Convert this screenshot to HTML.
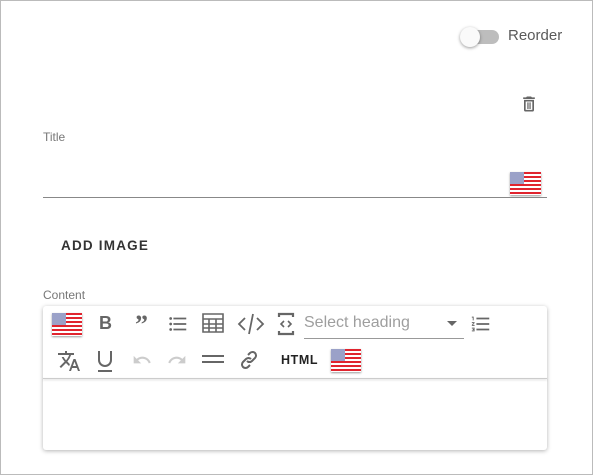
<!DOCTYPE html>
<html><head><style>
*{box-sizing:border-box}
body{margin:0;width:593px;height:475px;background:#fff;font-family:"Liberation Sans",sans-serif;position:relative;overflow:hidden}
.frame{position:absolute;left:0;top:0;width:593px;height:475px;border:1px solid #bbb}
.abs{position:absolute}
.flag{position:absolute;width:31px;height:23px;background:repeating-linear-gradient(#e0242e 0 2px,#fff 2px 4px);box-shadow:0 1px 2px rgba(0,0,0,.4)}
.flag:before{content:"";position:absolute;left:0;top:0;width:14px;height:12px;background:#2d3a8c;background-image:radial-gradient(#fff 0.7px,transparent 0.9px);background-size:2px 2px}
.ic{position:absolute;color:#666}
</style></head><body>
<div class="frame"></div>
<div class="abs" style="left:461px;top:30px;width:38px;height:14px;border-radius:7px;background:#bdbdbd"></div>
<div class="abs" style="left:460px;top:27px;width:20px;height:20px;border-radius:50%;background:#fafafa;box-shadow:0 1px 3px rgba(0,0,0,.4)"></div>
<div class="abs" style="left:508px;top:27px;font-size:15px;color:#5a5a5a">Reorder</div>
<svg class="abs" style="left:519px;top:94px" width="20" height="20" viewBox="0 0 24 24"><path fill="#666" d="M6 19a2 2 0 002 2h8a2 2 0 002-2V7H6zm2-10h8v10H8zm7.5-5l-1-1h-5l-1 1H5v2h14V4zM10 10h1.5v8H10zm2.5 0H14v8h-1.5z"/></svg>
<div class="abs" style="left:43px;top:130px;font-size:12px;color:#777">Title</div>
<div class="flag" style="left:510px;top:172px"></div>
<div class="abs" style="left:43px;top:197px;width:504px;height:1px;background:#888"></div>
<div class="abs" style="left:61px;top:238px;font-size:13.5px;letter-spacing:1.2px;font-weight:bold;color:#333">ADD IMAGE</div>
<div class="abs" style="left:43px;top:288px;font-size:12px;color:#777">Content</div>
<div class="abs" style="left:43px;top:306px;width:504px;height:144px;border-radius:3px;box-shadow:0 1px 4px rgba(0,0,0,.3)"></div>
<div class="abs" style="left:43px;top:378px;width:504px;height:1px;background:#ccc;box-shadow:0 1px 2px rgba(0,0,0,.2)"></div>
<div class="flag" style="left:52px;top:313px;width:30px"></div>
<div class="ic" style="left:99px;top:313px;font-size:18px;font-weight:bold">B</div>
<div class="ic" style="left:135px;top:310px;font-size:26px;font-weight:bold;font-family:'Liberation Serif',serif">”</div>
<svg class="ic" style="left:167px;top:313px" width="22" height="22" viewBox="0 0 24 24"><path fill="#666" d="M4 10.5a1.5 1.5 0 100 3 1.5 1.5 0 000-3zm0-6a1.5 1.5 0 100 3 1.5 1.5 0 000-3zm0 12a1.5 1.5 0 100 3 1.5 1.5 0 000-3zM7 19h14v-2H7zm0-6h14v-2H7zm0-8v2h14V5z"/></svg>
<svg class="ic" style="left:202px;top:313px" width="22" height="20" viewBox="0 0 22 20"><path fill="none" stroke="#666" stroke-width="1.6" d="M1 1h20v18H1zM1 6h20M1 11h20M1 15h20M7 6v13M14 6v13"/></svg>
<svg class="ic" style="left:237px;top:312px" width="28" height="24" viewBox="0 0 28 24"><path fill="none" stroke="#666" stroke-width="1.8" d="M8 6L2 12l6 6M20 6l6 6-6 6M16 2l-4 20"/></svg>
<svg class="ic" style="left:277px;top:311px" width="18" height="26" viewBox="0 0 18 26"><path fill="none" stroke="#666" stroke-width="2.2" d="M2 6V3h14v3M2 20v3h14v-3"/><path fill="none" stroke="#666" stroke-width="1.6" d="M7 10l-3 3 3 3M11 10l3 3-3 3"/></svg>
<div class="abs" style="left:304px;top:314px;font-size:16px;color:#9e9e9e">Select heading</div>
<div class="abs" style="left:304px;top:338px;width:160px;height:1px;background:#999"></div>
<div class="abs" style="left:447px;top:321px;border:5px solid transparent;border-top-color:#666"></div>
<svg class="ic" style="left:470px;top:313px" width="22" height="22" viewBox="0 0 24 24"><path fill="#666" d="M2 17h2v.5H3v1h1v.5H2v1h3v-4H2zm1-9h1V4H2v1h1zm-1 3h1.8L2 13.1v.9h3v-1H3.2L5 10.9V10H2zm5-6v2h14V5zm0 14h14v-2H7zm0-6h14v-2H7z"/></svg>
<svg class="ic" style="left:57px;top:349px" width="24" height="24" viewBox="0 0 24 24"><path fill="#666" d="M12.87 15.07l-2.54-2.51.03-.03A17.5 17.5 0 0014.07 6H17V4h-7V2H8v2H1v2h11.17C11.5 7.920 10.44 9.75 9 11.35 8.07 10.32 7.3 9.19 6.69 8h-2c.73 1.63 1.73 3.17 2.98 4.56l-5.09 5.02L4 19l5-5 3.11 3.110zM18.5 10h-2L12 22h2l1.12-3h4.75L21 22h2zm-2.62 7l1.62-4.33L19.12 17z"/></svg>
<svg class="ic" style="left:94px;top:348px" width="22" height="26" viewBox="0 0 22 26"><path fill="none" stroke="#666" stroke-width="2" d="M5 3v9a6 6 0 0012 0V3"/><path stroke="#666" stroke-width="2" d="M4 23h14"/></svg>
<svg class="ic" style="left:130px;top:350px" width="24" height="20" viewBox="0 0 24 24"><path fill="#ccc" d="M12.5 8c-2.65 0-5.05.99-6.9 2.6L2 7v9h9l-3.62-3.620c1.39-1.16 3.16-1.88 5.12-1.88 3.54 0 6.55 2.31 7.6 5.5l2.37-.78C21.08 11.03 17.150 8 12.5 8z"/></svg>
<svg class="ic" style="left:165px;top:350px" width="24" height="20" viewBox="0 0 24 24"><path fill="#ccc" d="M18.4 10.6C16.55 8.99 14.15 8 11.5 8c-4.65 0-8.58 3.03-9.96 7.22L3.9 16c1.05-3.19 4.05-5.5 7.6-5.5 1.95 0 3.73.72 5.12 1.88L13 16h9V7z"/></svg>
<div class="abs" style="left:202px;top:355px;width:22px;height:2px;background:#666"></div>
<div class="abs" style="left:202px;top:361px;width:22px;height:2px;background:#666"></div>
<svg class="ic" style="left:239px;top:349px" width="20" height="22" viewBox="0 0 20 22"><path fill="none" stroke="#666" stroke-width="2" d="M9 6l2-2a3.5 3.5 0 015 5l-3 3a3.5 3.5 0 01-5 0M11 16l-2 2a3.5 3.5 0 01-5-5l3-3a3.5 3.5 0 015 0"/></svg>
<div class="abs" style="left:281px;top:353px;font-size:12.5px;font-weight:bold;letter-spacing:.6px;color:#222">HTML</div>
<div class="flag" style="left:331px;top:349px;width:30px"></div>
</body></html>
